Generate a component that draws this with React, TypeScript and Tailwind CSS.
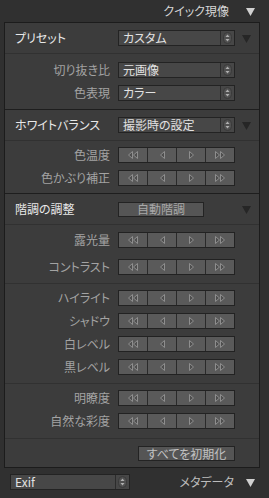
import React from "react";

type Dir = "ll" | "l" | "r" | "rr";

const Tri = ({ dir }: { dir: Dir }) => {
  // outlined little triangles used on the stepper buttons
  const left = "M4.5 0.5 L0.5 4 L4.5 7.5 Z";
  const right = "M0.5 0.5 L4.5 4 L0.5 7.5 Z";
  const w = dir === "ll" || dir === "rr" ? 10 : 5;
  return (
    <svg width={w} height={8} viewBox={`0 0 ${w} 8`}>
      {dir === "ll" && (
        <>
          <path d={left} fill="#4e4e4e" stroke="#8e8e8e" />
          <path d={left} transform="translate(5 0)" fill="#4e4e4e" stroke="#8e8e8e" />
        </>
      )}
      {dir === "l" && <path d={left} fill="#4e4e4e" stroke="#8e8e8e" />}
      {dir === "r" && <path d={right} fill="#4e4e4e" stroke="#8e8e8e" />}
      {dir === "rr" && (
        <>
          <path d={right} fill="#4e4e4e" stroke="#8e8e8e" />
          <path d={right} transform="translate(5 0)" fill="#4e4e4e" stroke="#8e8e8e" />
        </>
      )}
    </svg>
  );
};

const UpDown = () => (
  <svg width="9" height="12" viewBox="0 0 9 12">
    <rect x="0.5" y="0.5" width="8" height="11" rx="4" fill="#505050" stroke="#3a3a3a" />
    <path d="M4.5 2.5 L6.5 5 L2.5 5 Z" fill="#b0b0b0" />
    <path d="M4.5 9.5 L6.5 7 L2.5 7 Z" fill="#b0b0b0" />
  </svg>
);

const Caret = ({ color }: { color: string }) => (
  <svg width="9" height="9" viewBox="0 0 9 9">
    <path d="M0 1 L9 1 L4.5 9 Z" fill={color} />
  </svg>
);

const Select = ({ value, width = "w-[117px]" }: { value: string; width?: string }) => (
  <div className={`${width} h-[16px] flex border border-[#232323] bg-[#474747]`}>
    <div className="flex-1 flex items-center pl-[4px] text-[12px] leading-none text-[#e2e2e2]">{value}</div>
    <div className="w-[14px] flex items-center justify-center border-l border-[#2c2c2c]">
      <UpDown />
    </div>
  </div>
);

const Stepper = () => (
  <div className="w-[117px] h-[16px] flex border border-[#222] bg-[#5a5a5a]">
    {(["ll", "l", "r", "rr"] as Dir[]).map((d, i) => (
      <div key={d} className={`flex-1 flex items-center justify-center ${i > 0 ? "border-l border-[#2a2a2a]" : ""}`}>
        <Tri dir={d} />
      </div>
    ))}
  </div>
);

const SubRow = ({ label, children }: { label: string; children: React.ReactNode }) => (
  <div className="flex items-center h-[16px]">
    <div className="w-[105px] text-right text-[12px] leading-none text-[#a3a3a3]">{label}</div>
    <div className="ml-[8px]">{children}</div>
  </div>
);

const HeaderRow = ({ label, children }: { label: string; children: React.ReactNode }) => (
  <div className="flex items-center h-[31px] border-b border-[#313131]">
    <div className="w-[105px] pl-[10px] text-[12px] leading-none text-[#e8e8e8]">{label}</div>
    <div className="ml-[8px] w-[117px]">{children}</div>
    <div className="ml-[7px] flex items-center">
      <Caret color="#262626" />
    </div>
  </div>
);

export default function App() {
  return (
    <div
      className="w-[269px] h-[498px] bg-[#303030] overflow-hidden [font-feature-settings:'palt']"
      style={{ fontFamily: '"Noto Sans CJK JP", "Noto Sans", sans-serif' }}
    >
      <div className="h-[22px] flex items-center justify-end pr-[14px] text-[12px] text-[#d6d6d6]">
        クイック現像
        <span className="ml-[17px] flex">
          <Caret color="#d0d0d0" />
        </span>
      </div>

      <div className="ml-[4px] w-[256px] border border-[#1c1c1c] bg-[#3c3c3c]">
        {/* preset */}
        <HeaderRow label="プリセット">
          <Select value="カスタム" />
        </HeaderRow>
        <div className="flex flex-col gap-[7px] pt-[8px] pb-[8px] border-b border-[#1e1e1e]">
          <SubRow label="切り抜き比">
            <Select value="元画像" />
          </SubRow>
          <SubRow label="色表現">
            <Select value="カラー" />
          </SubRow>
        </div>

        {/* white balance */}
        <HeaderRow label="ホワイトバランス">
          <Select value="撮影時の設定" />
        </HeaderRow>
        <div className="flex flex-col gap-[7px] pt-[6px] pb-[7px] border-b border-[#1e1e1e]">
          <SubRow label="色温度">
            <Stepper />
          </SubRow>
          <SubRow label="色かぶり補正">
            <Stepper />
          </SubRow>
        </div>

        {/* tone */}
        <HeaderRow label="階調の調整">
          <div className="w-[86px] h-[15px] flex items-center justify-center border border-[#232323] bg-[#555] text-[12px] leading-none text-[#a8a8a8]">
            自動階調
          </div>
        </HeaderRow>
        <div className="flex flex-col gap-[11px] pt-[7px] pb-[8px] border-b border-[#313131]">
          <SubRow label="露光量">
            <Stepper />
          </SubRow>
          <SubRow label="コントラスト">
            <Stepper />
          </SubRow>
        </div>
        <div className="flex flex-col gap-[7px] pt-[6px] pb-[8px] border-b border-[#313131]">
          {["ハイライト", "シャドウ", "白レベル", "黒レベル"].map((l) => (
            <SubRow key={l} label={l}>
              <Stepper />
            </SubRow>
          ))}
        </div>
        <div className="flex flex-col gap-[7px] pt-[6px] pb-[9px] border-b border-[#313131]">
          <SubRow label="明瞭度">
            <Stepper />
          </SubRow>
          <SubRow label="自然な彩度">
            <Stepper />
          </SubRow>
        </div>
        <div className="flex justify-end pr-[24px] pt-[7px] pb-[6px]">
          <div className="w-[97px] h-[15px] flex items-center justify-center border border-[#232323] bg-[#555] text-[12px] leading-none text-[#c2c2c2]">
            すべてを初期化
          </div>
        </div>
      </div>

      <div className="flex items-center h-[28px]">
        <div className="ml-[10px]">
          <Select value="Exif" width="w-[120px]" />
        </div>
        <div className="ml-auto flex items-center pr-[14px] text-[12px] text-[#bcbcbc]">
          メタデータ
          <span className="ml-[12px] flex">
            <Caret color="#d0d0d0" />
          </span>
        </div>
      </div>
    </div>
  );
}
